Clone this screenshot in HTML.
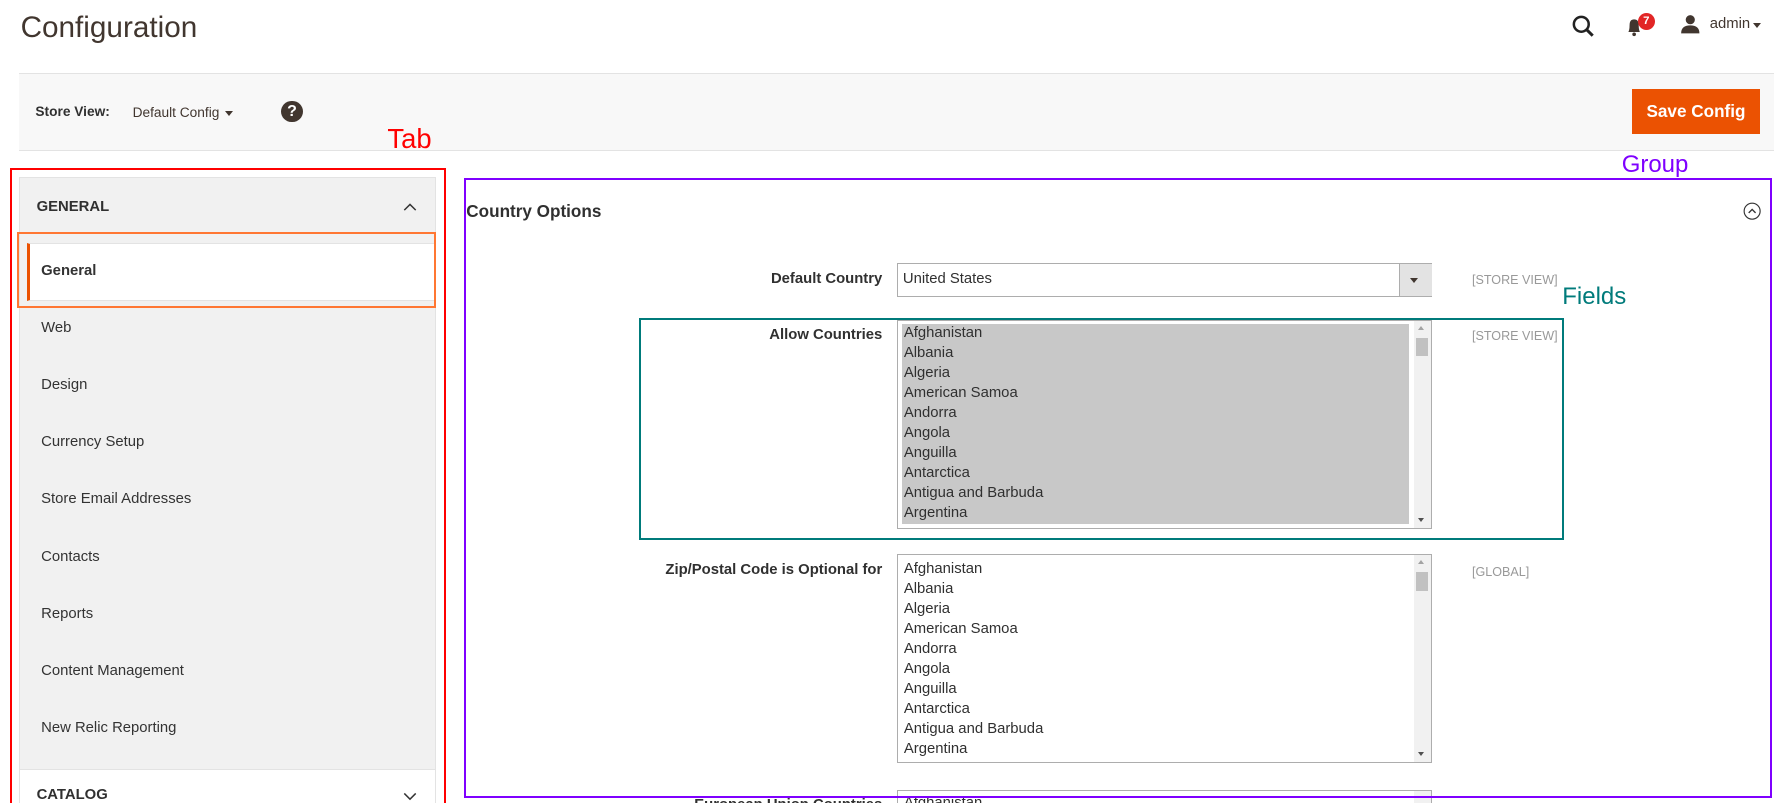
<!DOCTYPE html>
<html><head><meta charset="utf-8"><style>
html,body{margin:0;padding:0;background:#fff;overflow:hidden}
body{width:1792px;height:803px}
#w{zoom:1.142857;width:1568px;height:703px;position:relative;font-family:"Liberation Sans",sans-serif;color:#303030;overflow:hidden}
.a{position:absolute;white-space:nowrap}
.nav{position:absolute;left:36px;font-size:13px;color:#333}
.lbl{position:absolute;right:796px;font-size:13px;font-weight:bold;color:#303030;text-align:right}
.scope{position:absolute;left:1288px;font-size:11px;color:#999}
.list{position:absolute;left:785px;width:466px;border:1px solid #adadad;background:#fff;overflow:hidden}
.list .o{font-size:13px;color:#303030;height:17.5px;line-height:17.5px;padding-left:5px}
.sb{position:absolute;right:0;top:0;bottom:0;width:15px;background:#f1f1f1}
</style></head><body><div id="w">
<div class="a" style="left:18px;top:10px;font-size:26px;color:#41362f">Configuration</div>
<svg class="a" style="left:1375px;top:12px" width="22" height="22" viewBox="0 0 22 22"><circle cx="9" cy="9" r="6.5" fill="none" stroke="#222" stroke-width="2.2"/><path d="M13.5 13.5L19 19" stroke="#222" stroke-width="2.6"/></svg>
<svg class="a" style="left:1422px;top:14px" width="18" height="18" viewBox="0 0 18 18"><path d="M3 14 Q4 12 4 8 Q4 3 8 3 Q12 3 12 8 Q12 12 13 14Z" fill="#41362f"/><circle cx="8" cy="16" r="1.6" fill="#41362f"/></svg>
<div class="a" style="left:1433px;top:11px;width:15px;height:15px;border-radius:8px;background:#e22626;color:#fff;font-size:10px;font-weight:bold;text-align:center;line-height:15px">7</div>
<svg class="a" style="left:1470px;top:12px" width="18" height="18" viewBox="0 0 18 18"><circle cx="9" cy="5" r="4" fill="#41362f"/><path d="M1 17 Q1 10 9 10 Q17 10 17 17Z" fill="#41362f"/></svg>
<div class="a" style="left:1496px;top:14px;font-size:13px;color:#41362f">admin</div>
<div class="a" style="left:1534px;top:20px;border:4px solid transparent;border-top:5px solid #41362f"></div>

<div class="a" style="left:17px;top:64px;width:1535px;height:66px;background:#f8f8f8;border-top:1px solid #e3e3e3;border-bottom:1px solid #e3e3e3"></div>
<div class="a" style="left:31px;top:91px;font-size:12px;font-weight:bold;color:#303030">Store View:</div>
<div class="a" style="left:116px;top:92px;font-size:12px;color:#41362f">Default Config</div>
<div class="a" style="left:197px;top:97px;border:4px solid transparent;border-top:5px solid #41362f"></div>
<div class="a" style="left:246px;top:88px;width:19px;height:19px;border-radius:10px;background:#41362f;color:#fff;font-size:14px;font-weight:bold;text-align:center;line-height:19px">?</div>
<div class="a" style="left:1428px;top:78px;width:112px;height:39px;background:#eb5202;color:#fff;font-size:15px;font-weight:bold;text-align:center;line-height:39px">Save Config</div>

<div class="a" style="left:339px;top:108px;font-size:24px;color:#f00">Tab</div>
<div class="a" style="left:1419px;top:132px;font-size:21px;color:#7f00ff">Group</div>
<div class="a" style="left:1367px;top:248px;font-size:21px;color:#007b7b">Fields</div>
<div class="a" style="left:281px;top:284px;font-size:21px;color:#ff7733">Section</div>

<div class="a" style="left:17px;top:155px;width:363px;height:518px;background:#f1f1f1;border:1px solid #e3e3e3"></div>
<div class="a" style="left:17px;top:673px;width:363px;height:29px;background:#fff;border:1px solid #e3e3e3;border-bottom:0"></div>
<div class="a" style="left:32px;top:174px;font-size:13px;font-weight:bold;color:#303030">GENERAL</div>
<svg class="a" style="left:352px;top:176px" width="14" height="10"><path d="M2 8L7 3L12 8" fill="none" stroke="#333" stroke-width="1.3"/></svg>
<div class="a" style="left:24px;top:213px;width:356px;height:50px;background:#fff;border-left:3px solid #eb5202;border-top:1px solid #e3e3e3;border-bottom:1px solid #e3e3e3;box-sizing:border-box"></div>
<div class="nav" style="top:230px;font-weight:bold">General</div>
<div class="nav" style="top:280px">Web</div>
<div class="nav" style="top:330px">Design</div>
<div class="nav" style="top:380px">Currency Setup</div>
<div class="nav" style="top:430px">Store Email Addresses</div>
<div class="nav" style="top:480px">Contacts</div>
<div class="nav" style="top:530px">Reports</div>
<div class="nav" style="top:580px">Content Management</div>
<div class="nav" style="top:630px">New Relic Reporting</div>
<div class="a" style="left:32px;top:689px;font-size:13px;font-weight:bold;color:#303030">CATALOG</div>
<svg class="a" style="left:352px;top:691px" width="14" height="10"><path d="M2 3L7 8L12 3" fill="none" stroke="#333" stroke-width="1.3"/></svg>
<div class="a" style="left:15px;top:203px;width:363px;height:63px;border:2px solid #ff7733"></div>
<div class="a" style="left:9px;top:147px;width:378px;height:556px;border:2px solid #f00;border-bottom:0"></div>

<div class="a" style="left:408px;top:176px;font-size:15px;font-weight:bold;color:#303030">Country Options</div>
<svg class="a" style="left:1525px;top:177px" width="16" height="16"><circle cx="8" cy="8" r="7" fill="none" stroke="#333" stroke-width="1"/><path d="M5 9.5L8 6.5L11 9.5" fill="none" stroke="#333" stroke-width="1.2"/></svg>

<div class="lbl" style="top:237px">Default Country</div>
<div class="a" style="left:785px;top:230px;width:466px;height:28px;border:1px solid #adadad;background:#fff"></div>
<div class="a" style="left:1224px;top:231px;width:28px;height:28px;background:#e3e3e3;border-left:1px solid #adadad"></div>
<div class="a" style="left:1234px;top:243px;border:4px solid transparent;border-top:5px solid #41362f"></div>
<div class="a" style="left:790px;top:237px;font-size:13px;color:#303030">United States</div>
<div class="scope" style="top:239px">[STORE VIEW]</div>

<div class="lbl" style="top:286px">Allow Countries</div>
<div class="list" style="top:280px;height:181px">
<div style="position:absolute;left:3px;top:3px;width:444px;height:175px;background:#c8c8c8"></div>
<div style="position:relative;padding-top:2px">
<div class="o">Afghanistan</div><div class="o">Albania</div><div class="o">Algeria</div><div class="o">American Samoa</div><div class="o">Andorra</div><div class="o">Angola</div><div class="o">Anguilla</div><div class="o">Antarctica</div><div class="o">Antigua and Barbuda</div><div class="o">Argentina</div></div>
<div class="sb"><div style="position:absolute;left:2px;top:15px;width:11px;height:16px;background:#c1c1c1"></div><div style="position:absolute;left:4px;top:4px;border:3px solid transparent;border-bottom:4px solid #a3a3a3;border-top:0"></div><div style="position:absolute;left:4px;bottom:5px;border:3px solid transparent;border-top:4px solid #505050;border-bottom:0"></div></div>
</div>
<div class="scope" style="top:288px">[STORE VIEW]</div>

<div class="lbl" style="top:492px">Zip/Postal Code is Optional for</div>
<div class="list" style="top:485px;height:181px">
<div style="position:relative;padding-top:3px">
<div class="o">Afghanistan</div><div class="o">Albania</div><div class="o">Algeria</div><div class="o">American Samoa</div><div class="o">Andorra</div><div class="o">Angola</div><div class="o">Anguilla</div><div class="o">Antarctica</div><div class="o">Antigua and Barbuda</div><div class="o">Argentina</div></div>
<div class="sb"><div style="position:absolute;left:2px;top:15px;width:11px;height:16px;background:#c1c1c1"></div><div style="position:absolute;left:4px;top:4px;border:3px solid transparent;border-bottom:4px solid #a3a3a3;border-top:0"></div><div style="position:absolute;left:4px;bottom:5px;border:3px solid transparent;border-top:4px solid #505050;border-bottom:0"></div></div>
</div>
<div class="scope" style="top:494px">[GLOBAL]</div>

<div class="list" style="top:691px;height:11px;border-bottom:0"><div class="o" style="padding-top:2px;height:9px;overflow:hidden">Afghanistan</div><div class="sb"></div></div>
<div class="a" style="left:600px;top:697px;width:172px;height:6px;overflow:hidden;text-align:right;font-size:13px;font-weight:bold;color:#303030;line-height:14px">European Union Countries</div>

<div class="a" style="left:559px;top:278px;width:806px;height:191px;border:2px solid #007b7b"></div>
<div class="a" style="left:406px;top:156px;width:1141px;height:539px;border:2px solid #7f00ff"></div>
</div></body></html>
